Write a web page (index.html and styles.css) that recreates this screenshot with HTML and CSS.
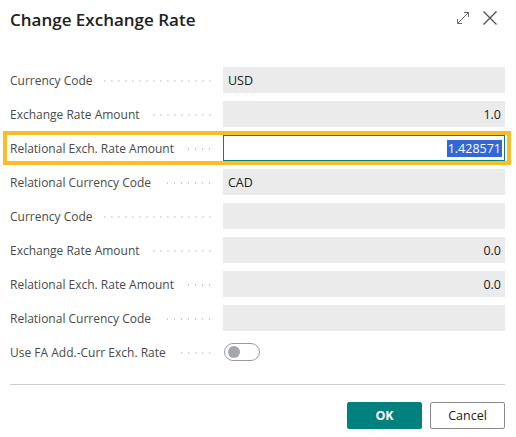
FILE: index.html
```html
<!DOCTYPE html>
<html lang="en">
<head>
<meta charset="utf-8">
<title>Change Exchange Rate</title>
<link rel="stylesheet" href="styles.css">
</head>
<body>
<div class="dialog">
  <header class="head">
    <h1 class="title">Change Exchange Rate</h1>
    <div class="head-actions">
      <svg class="ico" width="14" height="14" viewBox="0 0 14 14" aria-hidden="true">
        <path d="M1.5 12.5 L12.5 1.5 M8 1.5 H12.5 V6 M1.5 8 V12.5 H6" fill="none" stroke="#6a6a6a" stroke-width="1"/>
      </svg>
      <svg class="ico" width="16" height="16" viewBox="0 0 16 16" aria-hidden="true">
        <path d="M1.5 1.5 L14.5 14.5 M14.5 1.5 L1.5 14.5" fill="none" stroke="#505050" stroke-width="1.3"/>
      </svg>
    </div>
  </header>

  <div class="form">
    <div class="row"><span class="label">Currency Code</span><span class="leader"></span><div class="field">USD</div></div>
    <div class="row"><span class="label">Exchange Rate Amount</span><span class="leader"></span><div class="field num">1.0</div></div>
    <div class="row focus"><span class="label">Relational Exch. Rate Amount</span><span class="leader"></span><div class="field input num"><span class="sel">1.428571</span></div></div>
    <div class="row"><span class="label">Relational Currency Code</span><span class="leader"></span><div class="field">CAD</div></div>
    <div class="row"><span class="label">Currency Code</span><span class="leader"></span><div class="field"></div></div>
    <div class="row"><span class="label">Exchange Rate Amount</span><span class="leader"></span><div class="field num">0.0</div></div>
    <div class="row"><span class="label">Relational Exch. Rate Amount</span><span class="leader"></span><div class="field num">0.0</div></div>
    <div class="row"><span class="label">Relational Currency Code</span><span class="leader"></span><div class="field"></div></div>
    <div class="row"><span class="label">Use FA Add.-Curr Exch. Rate</span><span class="leader"></span><div class="toggle-wrap"><span class="toggle"><span class="knob"></span></span></div></div>
  </div>

  <div class="sep"></div>

  <div class="buttons">
    <button class="btn primary">OK</button>
    <button class="btn">Cancel</button>
  </div>
</div>
</body>
</html>
```

FILE: styles.css
```css
* { box-sizing: border-box; }
html, body { margin: 0; padding: 0; background: #ffffff; }
body {
  font-family: "Open Sans", "Noto Sans", sans-serif;
  color: #212121;
  width: 516px;
  height: 437px;
  overflow: hidden;
}
.dialog { padding: 0 11px 0 10px; }
.head {
  display: flex;
  align-items: center;
  justify-content: space-between;
  height: 36px;
}
.title {
  margin: 0;
  font-size: 17px;
  font-weight: 600;
  color: #212121;
  position: relative;
  top: 1px;
}
.head-actions {
  display: flex;
  align-items: center;
  gap: 12px;
  padding-right: 7px;
}
.form { margin-top: 27px; }
.row {
  display: flex;
  align-items: center;
  height: 34px;
  position: relative;
}
.row.focus::before {
  content: "";
  position: absolute;
  left: -7px;
  right: -6px;
  top: 0;
  bottom: 0;
  border: 4px solid #fbbd25;
  pointer-events: none;
}
.label {
  font-size: 12px;
  color: #4a4a4a;
  white-space: nowrap;
}
.leader {
  flex: 1;
  height: 2px;
  margin: 1px 10px 0 10px;
  background-image: radial-gradient(circle, #c8c8c8 0.9px, transparent 1.1px);
  background-size: 7px 2px;
  background-position: right center;
  background-repeat: repeat-x;
}
.field {
  flex: 0 0 282px;
  height: 26px;
  background: #ebebeb;
  font-size: 12.5px;
  color: #212121;
  display: flex;
  align-items: center;
  padding: 0 4px 0 5px;
}
.field.num { justify-content: flex-end; }
.field.input {
  background: #ffffff;
  border: 1px solid #087f7b;
  padding-right: 2px;
}
.sel {
  background: #3267d6;
  color: #ffffff;
  line-height: 17px;
  padding: 0 1px;
}
.toggle-wrap {
  flex: 0 0 282px;
  display: flex;
  align-items: center;
  padding-left: 1px;
}
.toggle {
  width: 36px;
  height: 18px;
  border: 1px solid #9a9a9a;
  border-radius: 9px;
  display: flex;
  align-items: center;
  padding-left: 3px;
}
.knob {
  width: 12px;
  height: 12px;
  border-radius: 50%;
  background: #a3a6ad;
}
.sep {
  height: 1px;
  background: #cccccc;
  margin-top: 15px;
}
.buttons {
  display: flex;
  justify-content: flex-end;
  gap: 8px;
  margin-top: 17px;
}
.btn {
  width: 75px;
  height: 27px;
  font-family: "Open Sans", "Noto Sans", sans-serif;
  font-size: 12.5px;
  border: 1px solid #8a8a8a;
  background: #ffffff;
  color: #212121;
  border-radius: 2px;
  padding: 0;
}
.btn.primary {
  background: #01817d;
  border-color: #01817d;
  color: #ffffff;
  font-weight: 700;
}
```
